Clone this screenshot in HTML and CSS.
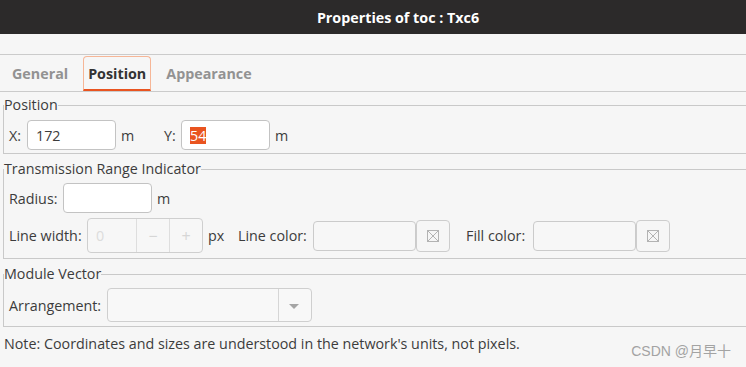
FILE: index.html
```html
<!DOCTYPE html>
<html lang="en">
<head>
    <meta charset="UTF-8">
    <meta name="viewport" content="width=device-width, initial-scale=1.0">
    <title>Properties of toc : Txc6</title>
    <link rel="stylesheet" href="styles.css">
</head>
<body>
<div class="titlebar">Properties of toc : Txc6</div>
<div class="topgap"></div>

<div class="tabs">
    <span class="tab">General</span>
    <span class="tab active">Position</span>
    <span class="tab">Appearance</span>
</div>

<fieldset class="group group-position">
    <legend>Position</legend>
    <div class="row">
        <span class="lbl lbl-x">X:</span>
        <div class="entry entry-coord">172</div>
        <span class="unit unit-x">m</span>
        <span class="lbl lbl-y">Y:</span>
        <div class="entry entry-coord"><span class="sel">54</span></div>
        <span class="unit">m</span>
    </div>
</fieldset>

<fieldset class="group group-range">
    <legend>Transmission Range Indicator</legend>
    <div class="row row-radius">
        <span class="lbl lbl-radius">Radius:</span>
        <div class="entry entry-coord"></div>
        <span class="unit">m</span>
    </div>
    <div class="row row-line">
        <span class="lbl lbl-width">Line width:</span>
        <div class="spin">
            <span class="spin-value">0</span>
            <span class="spin-btn">&minus;</span>
            <span class="spin-btn">+</span>
        </div>
        <span class="unit unit-px">px</span>
        <span class="lbl lbl-linecolor">Line color:</span>
        <div class="entry entry-color"></div>
        <div class="color-btn">
            <svg width="12" height="12" viewBox="0 0 12 12">
                <rect x="0.5" y="0.5" width="11" height="11" fill="none" stroke="#b3b3b3"/>
                <path d="M1 1L11 11M11 1L1 11" stroke="#b3b3b3" stroke-width="1"/>
            </svg>
        </div>
        <span class="lbl lbl-fillcolor">Fill color:</span>
        <div class="entry entry-color"></div>
        <div class="color-btn">
            <svg width="12" height="12" viewBox="0 0 12 12">
                <rect x="0.5" y="0.5" width="11" height="11" fill="none" stroke="#b3b3b3"/>
                <path d="M1 1L11 11M11 1L1 11" stroke="#b3b3b3" stroke-width="1"/>
            </svg>
        </div>
    </div>
</fieldset>

<fieldset class="group group-vector">
    <legend>Module Vector</legend>
    <div class="row">
        <span class="lbl lbl-arrange">Arrangement:</span>
        <div class="combo">
            <span class="combo-text"></span>
            <span class="combo-arrow"></span>
        </div>
    </div>
</fieldset>

<p class="note">Note: Coordinates and sizes are understood in the network's units, not pixels.</p>

<div class="watermark">CSDN @月早十</div>
</body>
</html>
```

FILE: styles.css
```css
* {
    margin: 0;
    padding: 0;
    box-sizing: border-box;
}

html {
    overflow: hidden;
}

body {
    position: relative;
    width: 746px;
    height: 367px;
    overflow: hidden;
    background: #f6f6f6;
    color: #3c3c3c;
    font-family: "Open Sans", "Liberation Sans", sans-serif;
    font-size: 14.3px;
}

.titlebar {
    height: 34px;
    padding-left: 50px;
    display: flex;
    justify-content: center;
    align-items: center;
    background: #2c2a2a;
    color: #fff;
    font-weight: bold;
}

.topgap {
    height: 21px;
    border-bottom: 1px solid #cbcbcb;
}

/* notebook tabs */
.tabs {
    height: 37px;
    padding-left: 7px;
    display: flex;
    align-items: flex-end;
    gap: 10px;
    border-bottom: 1px solid #cbcbcb;
}

.tab {
    height: 35px;
    padding: 0 4px;
    display: flex;
    align-items: center;
    border: 1px solid transparent;
    border-bottom-width: 2px;
    color: #929292;
    font-weight: bold;
}

.tab.active {
    color: #333;
    border-color: #f6b697;
    border-bottom-color: #e95420;
    border-radius: 4px 4px 0 0;
}

/* frames */
.group {
    margin: 5px -4px 0 3px;
    border: 1px solid #c9c9c9;
    min-width: 0;
}

.group legend {
    padding: 0;
    line-height: 16px;
}

.group-range,
.group-vector {
    margin-top: 7px;
}

.row {
    display: flex;
    align-items: center;
    padding-left: 5px;
}

.group-position .row {
    padding-top: 7px;
    padding-bottom: 3px;
}

.row-radius {
    padding-top: 6px;
}

.row-line {
    margin-top: 5px;
    padding-bottom: 5px;
}

.group-vector .row {
    padding-top: 6px;
    padding-bottom: 4px;
}

.lbl-x { width: 18px; }
.lbl-y { width: 17px; }
.lbl-radius { width: 54px; }
.lbl-width { width: 78px; }
.lbl-linecolor { width: 75px; }
.lbl-fillcolor { width: 67px; margin-left: 16px; }
.lbl-arrange { width: 98px; }

.unit {
    margin-left: 5px;
}

.unit-x {
    width: 43px;
}

.unit-px {
    width: 30px;
}

/* entries */
.entry {
    height: 30px;
    padding: 0 8px;
    display: flex;
    align-items: center;
    background: #fff;
    border: 1px solid #c3c3c3;
    border-radius: 4px;
}

.entry-coord {
    width: 89px;
}

.sel {
    background: #e95420;
    color: #fff;
    line-height: 17px;
}

.entry-color {
    width: 103px;
    background: #f7f7f7;
    border-color: #cbcbcb;
}

.color-btn {
    width: 34px;
    height: 32px;
    display: flex;
    justify-content: center;
    align-items: center;
    border: 1px solid #cdcdcd;
    border-radius: 4px;
    background: #f6f6f6;
}

.spin {
    width: 116px;
    height: 35px;
    display: flex;
    border: 1px solid #cfcfcf;
    border-radius: 4px;
    background: #f7f7f7;
}

.spin-value {
    width: 48px;
    padding-left: 8px;
    display: flex;
    align-items: center;
    color: #dcdcdc;
}

.spin-btn {
    flex: 1;
    display: flex;
    justify-content: center;
    align-items: center;
    border-left: 1px solid #dedede;
    color: #d6d6d6;
    font-size: 16px;
}

/* combo box */
.combo {
    width: 205px;
    height: 34px;
    display: flex;
    border: 1px solid #cfcfcf;
    border-radius: 4px;
    background: #f8f8f8;
}

.combo-text {
    width: 170px;
}

.combo-arrow {
    flex: 1;
    position: relative;
    border-left: 1px solid #d6d6d6;
}

.combo-arrow::after {
    content: '';
    position: absolute;
    left: 10px;
    top: 15px;
    border-left: 5px solid transparent;
    border-right: 5px solid transparent;
    border-top: 5px solid #a5a5a5;
}

.note {
    margin-top: 8px;
    padding-left: 4px;
    line-height: 17px;
}

.watermark {
    position: absolute;
    right: 15px;
    bottom: 7px;
    color: #a3a3a3;
    font-family: "Liberation Sans", "Noto Sans CJK SC", sans-serif;
    font-size: 14px;
}
```
